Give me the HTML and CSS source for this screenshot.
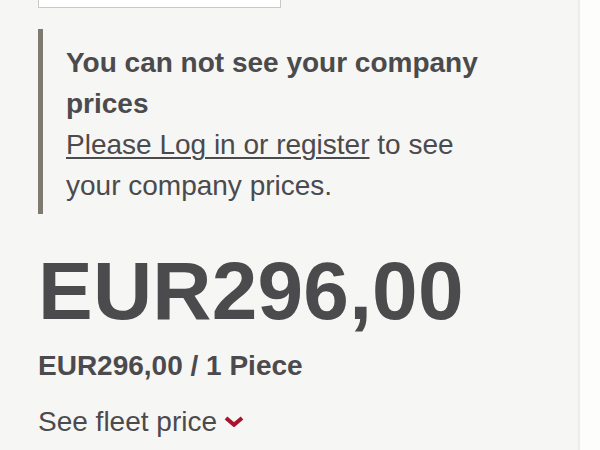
FILE: index.html
```html
<!DOCTYPE html>
<html lang="en">
<head>
<meta charset="utf-8">
<title>Product price</title>
<link rel="stylesheet" href="styles.css">
</head>
<body>
<div class="page">
  <main class="main">
    <div class="field"></div>
    <section class="notice">
      <p class="notice-title">You can not see your company prices</p>
      <p class="notice-text"><a class="notice-link" href="#">Please Log in or register</a> to see your company prices.</p>
    </section>
    <div class="price">EUR296,00</div>
    <div class="unit-price">EUR296,00 / 1 Piece</div>
    <button class="fleet" type="button">
      <span>See fleet price</span>
      <svg class="chevron" width="20" height="11" viewBox="0 0 20 11" aria-hidden="true">
        <polyline points="2,2 10,8.8 18,2" fill="none" stroke="#a8142e" stroke-width="4" stroke-linecap="butt" stroke-linejoin="miter"/>
      </svg>
    </button>
  </main>
  <div class="side"></div>
</div>
</body>
</html>
```

FILE: styles.css
```css
html, body {
  margin: 0;
  padding: 0;
  height: 100%;
}

body {
  font-family: "Liberation Sans", Arial, sans-serif;
  color: #4b4a4d;
  background: #fdfdfb;
}

.page {
  display: flex;
  min-height: 100%;
}

.main {
  width: 580px;
  box-sizing: border-box;
  background: #f6f6f4;
  border-right: 2px solid #ececea;
  padding: 0 70px 0 38px;
  display: flex;
  flex-direction: column;
  align-items: flex-start;
}

.side {
  flex: 1;
  background: #fdfdfb;
}

.field {
  width: 241px;
  height: 7px;
  background: #ffffff;
  border: 1px solid #c9c9c7;
  border-top: none;
}

.notice {
  margin-top: 21px;
  border-left: 5px solid #7e7a6f;
  padding: 13px 0 8px 23px;
  align-self: stretch;
}

.notice p {
  margin: 0;
  font-size: 28px;
  line-height: 41px;
}

.notice-title {
  font-weight: bold;
}

.notice-link {
  color: inherit;
  text-decoration: underline;
  text-decoration-thickness: 2px;
  text-underline-offset: 3px;
}

.price {
  margin-top: 36px;
  font-size: 82px;
  line-height: 82px;
  font-weight: bold;
  letter-spacing: 0.2px;
}

.unit-price {
  margin-top: 16px;
  font-size: 28px;
  line-height: 36px;
  font-weight: bold;
}

.fleet {
  margin-top: 20px;
  padding: 0;
  border: none;
  background: none;
  font: inherit;
  color: inherit;
  font-size: 28px;
  line-height: 36px;
  display: flex;
  align-items: center;
  gap: 7px;
  cursor: pointer;
}

.chevron {
  display: block;
  margin-top: -2px;
}
```
